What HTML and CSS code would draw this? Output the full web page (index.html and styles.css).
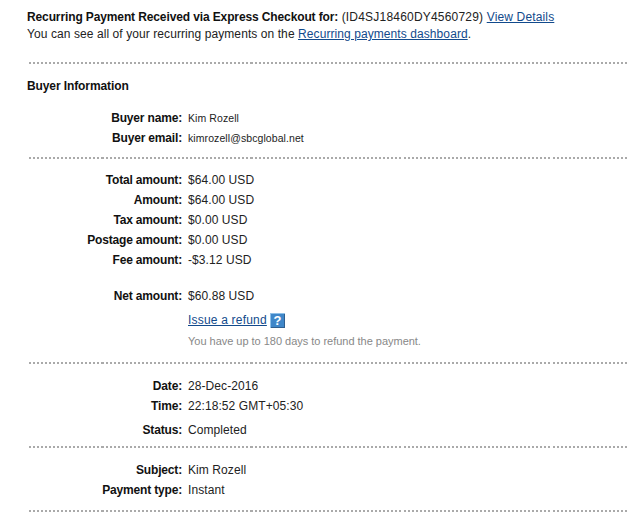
FILE: index.html
```html
<!DOCTYPE html>
<html lang="en">
<head>
<meta charset="utf-8">
<title>Recurring Payment</title>
<link rel="stylesheet" href="styles.css">
</head>
<body>
<main class="page">
  <section class="intro">
    <p><b>Recurring Payment Received via Express Checkout for:</b> <span class="ref-id">(ID4SJ18460DY4560729)</span> <a href="#" class="details">View Details</a></p>
    <p>You can see all of your recurring payments on the <a href="#">Recurring payments dashboard</a>.</p>
  </section>
  <section class="buyer-head"><h2>Buyer Information</h2></section>
  <dl class="rows buyer">
    <dt>Buyer name:</dt><dd class="small">Kim Rozell</dd>
    <dt>Buyer email:</dt><dd class="small">kimrozell@sbcglobal.net</dd>
  </dl>
  <dl class="rows amounts">
    <dt>Total amount:</dt><dd>$64.00 USD</dd>
    <dt>Amount:</dt><dd>$64.00 USD</dd>
    <dt>Tax amount:</dt><dd>$0.00 USD</dd>
    <dt>Postage amount:</dt><dd>$0.00 USD</dd>
    <dt>Fee amount:</dt><dd>-$3.12 USD</dd>
    <dt class="net">Net amount:</dt><dd class="net">$60.88 USD</dd>
    <dd class="refund"><a href="#">Issue a refund</a>
      <svg class="help" width="15" height="15" viewBox="0 0 15 15" aria-hidden="true"><rect width="15" height="15" fill="#3f87c9"/><path d="M0 0h15v1H1v14H0z" fill="#8fc0e8"/><path d="M14 1h1v14H1v-1h13z" fill="#2f5f8f"/><text x="7.5" y="12" text-anchor="middle" class="help-q">?</text></svg>
    </dd>
    <dd class="note">You have up to 180 days to refund the payment.</dd>
  </dl>
  <dl class="rows dates">
    <dt>Date:</dt><dd>28-Dec-2016</dd>
    <dt>Time:</dt><dd>22:18:52 GMT+05:30</dd>
    <dt class="status">Status:</dt><dd class="status">Completed</dd>
  </dl>
  <dl class="rows subject">
    <dt>Subject:</dt><dd>Kim Rozell</dd>
    <dt>Payment type:</dt><dd>Instant</dd>
  </dl>
</main>
</body>
</html>
```
FILE: styles.css
```css
html, body { margin: 0; padding: 0; background: #fff; }
body { font: 12px/20px "Liberation Sans", Arial, sans-serif; color: #222; letter-spacing: 0.08px; overflow: hidden; }
.page { padding: 9px 4px 0 27px; }
p { margin: 0; }
a { color: #124a8c; text-decoration: underline; }
b, dt, h2 { font-weight: 700; color: #111; letter-spacing: -0.1px; }
b { letter-spacing: -0.12px; }
dt { letter-spacing: -0.17px; }
.ref-id { letter-spacing: 0.2px; }
.details { letter-spacing: 0.15px; }
.intro, .rows {
  border-bottom: 2px solid #aaa;
  border-image: repeating-linear-gradient(to right, #aaa 0 2px, transparent 2px 4px) 2;
}
.intro { line-height: 17px; padding-bottom: 19px; }
.buyer-head { padding-top: 12px; }
h2 { margin: 0; font-size: 12px; line-height: 20px; }
.rows { display: grid; grid-template-columns: 155px 1fr; column-gap: 6px; margin: 0; }
dt { text-align: right; }
dd { margin: 0; }
.small { font-size: 10.5px; }
.buyer { padding: 12px 0 9px; }
.amounts { padding: 11px 0 11px; }
.net { margin-top: 16px; }
.refund { grid-column: 2; display: flex; align-items: center; gap: 3px; margin-top: 4px; letter-spacing: 0.2px; }
.help { display: block; }
.help-q { font: 700 13px "Liberation Sans", Arial, sans-serif; fill: #fff; }
.note { grid-column: 2; margin-top: 1px; font-size: 11px; letter-spacing: -0.02px; color: #888; }
.dates { padding: 12px 0 6px; }
.status { margin-top: 4px; }
.subject { padding: 12px 0 10px; }
```
